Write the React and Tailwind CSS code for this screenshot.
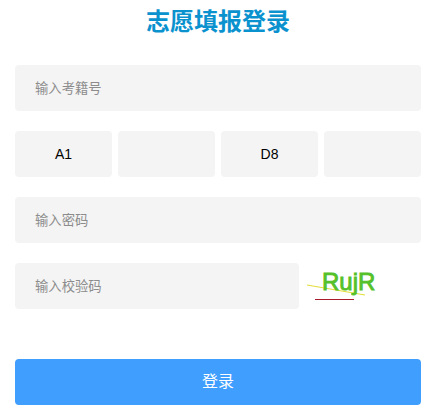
import React from "react";

const font = "font-['Liberation_Sans','Noto_Sans_CJK_SC',sans-serif]";
const field =
  "h-[46px] rounded bg-[#f4f4f4] text-black outline-none placeholder:text-[#8c8c8c] " + font;

function Captcha() {
  return (
    <div className="relative ml-2 h-[46px] w-[114px] shrink-0">
      <svg className="absolute inset-0" width="114" height="46" viewBox="0 0 114 46">
        <line x1="0" y1="22" x2="58" y2="32" stroke="#e2de3c" strokeWidth="1.2" />
        <line x1="8" y1="36.5" x2="47" y2="36.5" stroke="#a81c2c" strokeWidth="1" />
        <circle cx="45" cy="31" r="1" fill="#8acb3a" />
      </svg>
      <span className="absolute left-[15px] top-[4px] text-[24px] leading-[30px] [-webkit-text-stroke:0.9px_#55c12a] text-[#55c12a] font-['Liberation_Sans',sans-serif]">
        RujR
      </span>
    </div>
  );
}

export default function App() {
  return (
    <div className={"h-[414px] w-[434px] overflow-hidden bg-white pl-[15px] pr-[13px] " + font}>
      <h1 className="h-[44px] text-center text-2xl leading-[44px] font-bold text-[#0a92cf]">志愿填报登录</h1>
      <form className="mt-[21px] flex flex-col gap-5">
        <input className={field + " w-full px-5 text-[13.33px]"} placeholder="输入考籍号" />
        <div className="flex gap-1.5">
          <input className={field + " w-[97px] text-center text-sm"} defaultValue="A1" />
          <input className={field + " w-[97px] text-center text-sm"} />
          <input className={field + " w-[97px] text-center text-sm"} defaultValue="D8" />
          <input className={field + " w-[97px] text-center text-sm"} />
        </div>
        <input className={field + " w-full px-5 text-[13.33px]"} placeholder="输入密码" />
        <div className="flex">
          <input className={field + " w-[284px] px-5 text-[13.33px]"} placeholder="输入校验码" />
          <Captcha />
        </div>
        <button
          type="button"
          className="mt-[30px] h-[46px] w-full rounded bg-[#409eff] text-base text-white"
        >
          登录
        </button>
      </form>
    </div>
  );
}
